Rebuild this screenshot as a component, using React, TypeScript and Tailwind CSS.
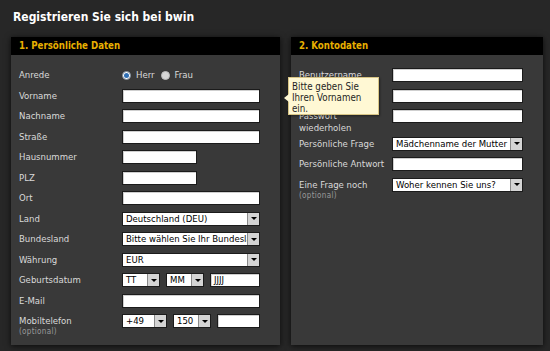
import React from "react";

function TextInput({ w, value = "" }: { w: string; value?: string }) {
  return (
    <div
      className={`${w} h-[14px] bg-white border border-[#1b1b1b] shadow-[inset_1px_1px_0_#cfcfcf] text-black text-[9.5px] leading-[12px] pl-[3px] overflow-hidden whitespace-nowrap`}
    >
      {value}
    </div>
  );
}

function Select({ w, value }: { w: string; value: string }) {
  return (
    <div className={`${w} h-[14px] flex bg-white border border-[#1b1b1b] overflow-hidden`}>
      <span className="flex-1 text-black text-[9.5px] leading-[12px] pl-[3px] overflow-hidden whitespace-nowrap">
        {value}
      </span>
      <span className="w-[12px] h-full flex items-center justify-center bg-[#d4d4d4] border-l border-[#8a8a8a]">
        <span className="w-0 h-0 border-l-[3px] border-r-[3px] border-t-[3px] border-l-transparent border-r-transparent border-t-black" />
      </span>
    </div>
  );
}

function Row({
  label,
  labelW,
  optional,
  tall,
  children,
}: {
  label: React.ReactNode;
  labelW: string;
  optional?: boolean;
  tall?: boolean;
  children: React.ReactNode;
}) {
  return (
    <div className={`flex items-start pt-[3px] ${tall ? "h-[27.5px]" : "h-[20.5px]"}`}>
      <div className={`${labelW} shrink-0 flex flex-col text-[#d9d9d9] text-[9.5px]`}>
        <span className={tall ? "leading-[12px] pt-[1px]" : "leading-[14px]"}>{label}</span>
        {optional && <span className="text-[8px] leading-[8px] text-[#9a9a9a] tracking-[0.3px]">(optional)</span>}
      </div>
      <div className="flex gap-[6px]">{children}</div>
    </div>
  );
}

function Radio({ checked }: { checked?: boolean }) {
  return (
    <span
      className={`w-[9px] h-[9px] rounded-full flex items-center justify-center border ${
        checked ? "bg-white border-[#7d8a99]" : "bg-[#d6d6d6] border-[#bdbdbd]"
      }`}
    >
      {checked && <span className="w-[5px] h-[5px] rounded-full bg-[#2f6fb5]" />}
    </span>
  );
}

function Panel({ title, w, children }: { title: string; w: string; children: React.ReactNode }) {
  return (
    <section className={`${w} h-[308px] bg-[#393939] shadow-[0_1px_6px_rgba(0,0,0,0.75)] flex flex-col`}>
      <div className="h-[18px] bg-black pl-[8px] text-[#e8b000] font-bold text-[9.6px] leading-[18px]">{title}</div>
      <div className="pl-[8px] pt-[10px]">{children}</div>
    </section>
  );
}

export default function App() {
  const L = "w-[103px]";
  const R = "w-[93px]";
  return (
    <div className="relative w-[550px] h-[351px] overflow-hidden bg-[#272727] font-['DejaVu_Sans_Condensed','DejaVu_Sans',sans-serif]">
      <h1 className="h-[37px] pl-[13px] pt-[9px] text-white font-bold text-[12px] leading-[16px]">
        Registrieren Sie sich bei bwin
      </h1>
      <div className="flex gap-[11px] pl-[11px]">
        <Panel title="1. Persönliche Daten" w="w-[269px]">
          <Row label="Anrede" labelW={L}>
            <div className="flex items-center h-[14px] text-[#d9d9d9] text-[9.5px]">
              <Radio checked />
              <span className="ml-[5px]">Herr</span>
              <span className="ml-[6px]">
                <Radio />
              </span>
              <span className="ml-[5px]">Frau</span>
            </div>
          </Row>
          <Row label="Vorname" labelW={L}>
            <TextInput w="w-[138px]" />
          </Row>
          <Row label="Nachname" labelW={L}>
            <TextInput w="w-[138px]" />
          </Row>
          <Row label="Straße" labelW={L}>
            <TextInput w="w-[138px]" />
          </Row>
          <Row label="Hausnummer" labelW={L}>
            <TextInput w="w-[75px]" />
          </Row>
          <Row label="PLZ" labelW={L}>
            <TextInput w="w-[75px]" />
          </Row>
          <Row label="Ort" labelW={L}>
            <TextInput w="w-[138px]" />
          </Row>
          <Row label="Land" labelW={L}>
            <Select w="w-[138px]" value="Deutschland (DEU)" />
          </Row>
          <Row label="Bundesland" labelW={L}>
            <Select w="w-[138px]" value="Bitte wählen Sie Ihr Bundesland" />
          </Row>
          <Row label="Währung" labelW={L}>
            <Select w="w-[138px]" value="EUR" />
          </Row>
          <Row label="Geburtsdatum" labelW={L}>
            <Select w="w-[38px]" value="TT" />
            <Select w="w-[38px]" value="MM" />
            <TextInput w="w-[50px]" value="JJJJ" />
          </Row>
          <Row label="E-Mail" labelW={L}>
            <TextInput w="w-[138px]" />
          </Row>
          <Row label="Mobiltelefon" labelW={L} optional>
            <Select w="w-[45px]" value="+49" />
            <Select w="w-[38px]" value="150" />
            <TextInput w="w-[43px]" />
          </Row>
        </Panel>
        <Panel title="2. Kontodaten" w="w-[252px]">
          <Row label="Benutzername" labelW={R}>
            <TextInput w="w-[131px]" />
          </Row>
          <Row label="Passwort" labelW={R}>
            <TextInput w="w-[131px]" />
          </Row>
          <Row label={<>Passwort<br />wiederholen</>} labelW={R} tall>
            <TextInput w="w-[131px]" />
          </Row>
          <Row label="Persönliche Frage" labelW={R}>
            <Select w="w-[131px]" value="Mädchenname der Mutter" />
          </Row>
          <Row label="Persönliche Antwort" labelW={R}>
            <TextInput w="w-[131px]" />
          </Row>
          <Row label="Eine Frage noch" labelW={R} optional>
            <Select w="w-[131px]" value="Woher kennen Sie uns?" />
          </Row>
        </Panel>
      </div>

      <div className="absolute left-[288px] top-[77px] w-[91px] h-[38px] bg-[#fff8d4] border border-[#d8c585] shadow-[1px_1px_2px_rgba(0,0,0,0.4)] pl-[3px] pt-[2.5px] text-[#1e1e1e] text-[9.7px] leading-[11.3px]">
        Bitte geben Sie
        <br />
        Ihren Vornamen
        <br />
        ein.
        <span className="absolute left-[-5px] top-[16px] w-0 h-0 border-t-[4px] border-b-[4px] border-r-[5px] border-t-transparent border-b-transparent border-r-[#fff8d4]" />
      </div>
    </div>
  );
}
